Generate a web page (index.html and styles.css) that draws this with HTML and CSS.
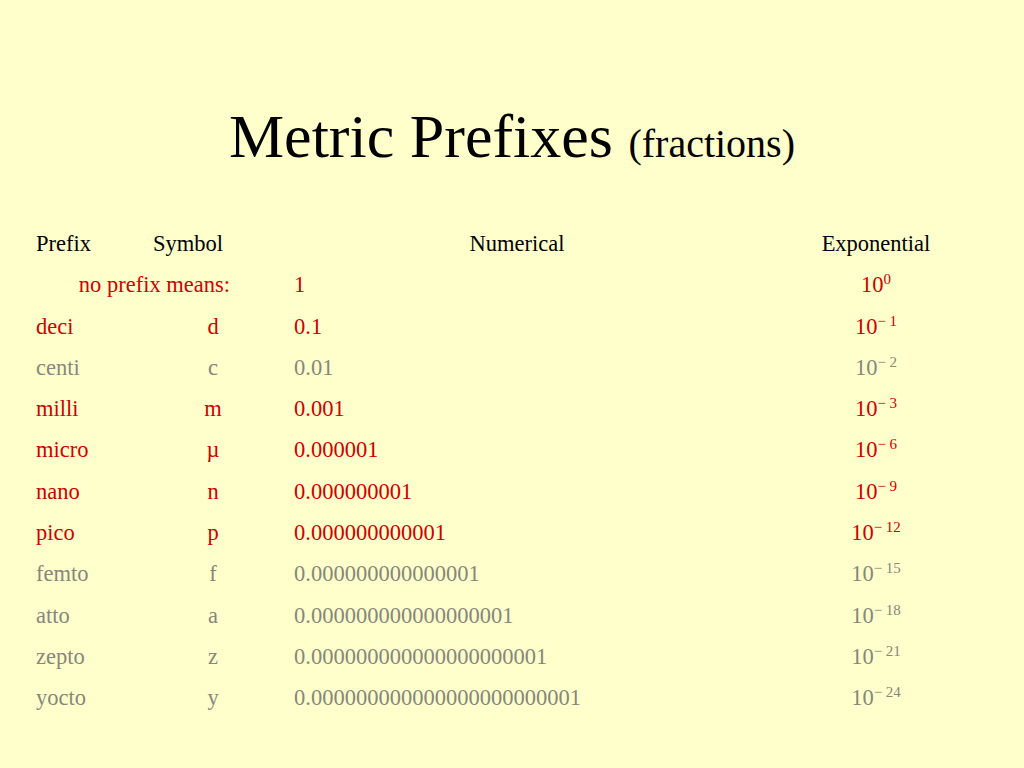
FILE: index.html
```html
<!DOCTYPE html>
<html>
<head>
<meta charset="utf-8">
<title>Metric Prefixes (fractions)</title>
<link rel="stylesheet" href="styles.css">
</head>
<body>
<h1 class="title">Metric Prefixes <span class="sub">(fractions)</span></h1>
<div class="head">
  <span>Prefix</span>
  <span>Symbol</span>
  <span class="c">Numerical</span>
  <span class="c">Exponential</span>
</div>
<div class="table">
  <div class="row red"><span class="nop">no prefix means:</span><span class="num">1</span><span class="exp">10<sup>0</sup></span></div>
  <div class="row red"><span>deci</span><span class="sym">d</span><span class="num">0.1</span><span class="exp">10<sup>&minus; 1</sup></span></div>
  <div class="row gray"><span>centi</span><span class="sym">c</span><span class="num">0.01</span><span class="exp">10<sup>&minus; 2</sup></span></div>
  <div class="row red"><span>milli</span><span class="sym">m</span><span class="num">0.001</span><span class="exp">10<sup>&minus; 3</sup></span></div>
  <div class="row red"><span>micro</span><span class="sym">&micro;</span><span class="num">0.000001</span><span class="exp">10<sup>&minus; 6</sup></span></div>
  <div class="row red"><span>nano</span><span class="sym">n</span><span class="num">0.000000001</span><span class="exp">10<sup>&minus; 9</sup></span></div>
  <div class="row red"><span>pico</span><span class="sym">p</span><span class="num">0.000000000001</span><span class="exp">10<sup>&minus; 12</sup></span></div>
  <div class="row gray"><span>femto</span><span class="sym">f</span><span class="num">0.000000000000001</span><span class="exp">10<sup>&minus; 15</sup></span></div>
  <div class="row gray"><span>atto</span><span class="sym">a</span><span class="num">0.000000000000000001</span><span class="exp">10<sup>&minus; 18</sup></span></div>
  <div class="row gray"><span>zepto</span><span class="sym">z</span><span class="num">0.000000000000000000001</span><span class="exp">10<sup>&minus; 21</sup></span></div>
  <div class="row gray"><span>yocto</span><span class="sym">y</span><span class="num">0.000000000000000000000001</span><span class="exp">10<sup>&minus; 24</sup></span></div>
</div>
</body>
</html>
```

FILE: styles.css
```css
html, body {
  margin: 0;
  padding: 0;
  background: #ffffcc;
  width: 1024px;
  height: 768px;
  overflow: hidden;
  font-family: "Liberation Serif", "Times New Roman", serif;
  color: #000;
}

.title {
  margin: 0;
  padding-top: 101px;
  font-size: 62px;
  line-height: 70px;
  font-weight: normal;
  text-align: center;
}

.title .sub {
  font-size: 40px;
}

.head {
  margin-top: 44px;
  display: grid;
  grid-template-columns: 117px 141px 446px 272px;
  padding-left: 36px;
  font-size: 22.5px;
  line-height: 41.3px;
}

.head .c {
  text-align: center;
}

.table {
  display: flex;
  flex-direction: column;
}

.row {
  display: grid;
  grid-template-columns: 147px 60px 51px 446px 272px;
  padding-left: 36px;
  font-size: 22.5px;
  line-height: 41.3px;
  height: 41.3px;
}

.row.red { color: #cc0000; }
.row.gray { color: #87877a; }

.row .nop {
  grid-column: 1 / 3;
  text-align: right;
  padding-right: 13px;
}

.row .sym {
  text-align: center;
}

.row .num {
  grid-column: 4;
}

.row .exp {
  grid-column: 5;
  text-align: center;
}

sup {
  font-size: 15px;
  line-height: 0;
  vertical-align: 8px;
}
```
